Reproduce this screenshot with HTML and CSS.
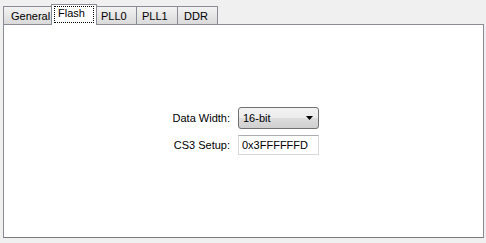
FILE: index.html
```html
<!DOCTYPE html>
<html lang="en">
<head>
    <meta charset="UTF-8">
    <title>Memory Settings</title>
    <link rel="stylesheet" href="styles.css">
</head>
<body>
    <div class="tabs">
        <div class="tab">General</div>
        <div class="tab active"><span class="focus">Flash</span></div>
        <div class="tab">PLL0</div>
        <div class="tab">PLL1</div>
        <div class="tab">DDR</div>
    </div>

    <div class="panel">
        <div class="form">
            <label for="width">Data Width:</label>
            <div class="combo" id="width">
                <span>16-bit</span>
                <svg width="7" height="4" viewBox="0 0 7 4"><path d="M0 0H7L3.5 4Z" fill="#000"/></svg>
            </div>
            <label for="cs3">CS3 Setup:</label>
            <input type="text" id="cs3" value="0x3FFFFFFD">
        </div>
    </div>
</body>
</html>
```

FILE: styles.css
```css
body {
    margin: 0;
    background-color: #f0f0f0;
    font-family: "Liberation Sans", Arial, sans-serif;
    font-size: 11px;
    color: #000;
    width: 486px;
    height: 243px;
}
.tabs {
    display: flex;
    align-items: flex-end;
    padding-left: 3px;
    height: 25px;
    position: relative;
    z-index: 1;
}
.tab {
    box-sizing: border-box;
    height: 18px;
    padding: 3px 6px 0 7px;
    margin-right: -1px;
    border: 1px solid #898c95;
    border-bottom: none;
    background: linear-gradient(#f3f3f3, #e6e6e6 50%, #dadada);
    margin-bottom: 1px;
}
.tab:first-child {
    width: 50px;
}
.tab.active {
    height: 21px;
    margin-bottom: 0;
    background: #fff;
    padding: 1px 2px 0 2px;
    width: 46px;
    margin-left: -1px;
    margin-right: -2px;
    position: relative;
    z-index: 2;
}
.tab:nth-child(3) { width: 42px; padding-left: 5px; }
.tab:nth-child(4) { width: 42px; padding-left: 5px; }
.tab:nth-child(5) { width: 41px; padding-left: 6px; }
.focus {
    display: block;
    border: 1px dotted #000;
    height: 17px;
    padding: 0 0 0 3px;
    box-sizing: border-box;
}
.panel {
    box-sizing: border-box;
    margin: -1px 0 0 3px;
    width: 481px;
    height: 214px;
    border: 1px solid #898c95;
    border-bottom-color: #7a7a7a;
    background: #fff;
    padding: 82px 0 0 159px;
}
.form {
    display: grid;
    grid-template-columns: 67px 81px;
    column-gap: 8px;
    row-gap: 6px;
    align-items: center;
}
.form label {
    text-align: right;
}
.combo {
    box-sizing: border-box;
    height: 22px;
    border: 1px solid #707070;
    border-radius: 3px;
    background: linear-gradient(#f2f2f2, #ebebeb 50%, #dddddd 51%, #cfcfcf);
    display: flex;
    align-items: center;
    justify-content: space-between;
    padding: 0 5px 0 4px;
}
.form input {
    box-sizing: border-box;
    height: 20px;
    width: 81px;
    margin: 0;
    border: 1px solid #d6d8dc;
    border-top-color: #abadb3;
    font: inherit;
    padding: 0 3px;
}
```
